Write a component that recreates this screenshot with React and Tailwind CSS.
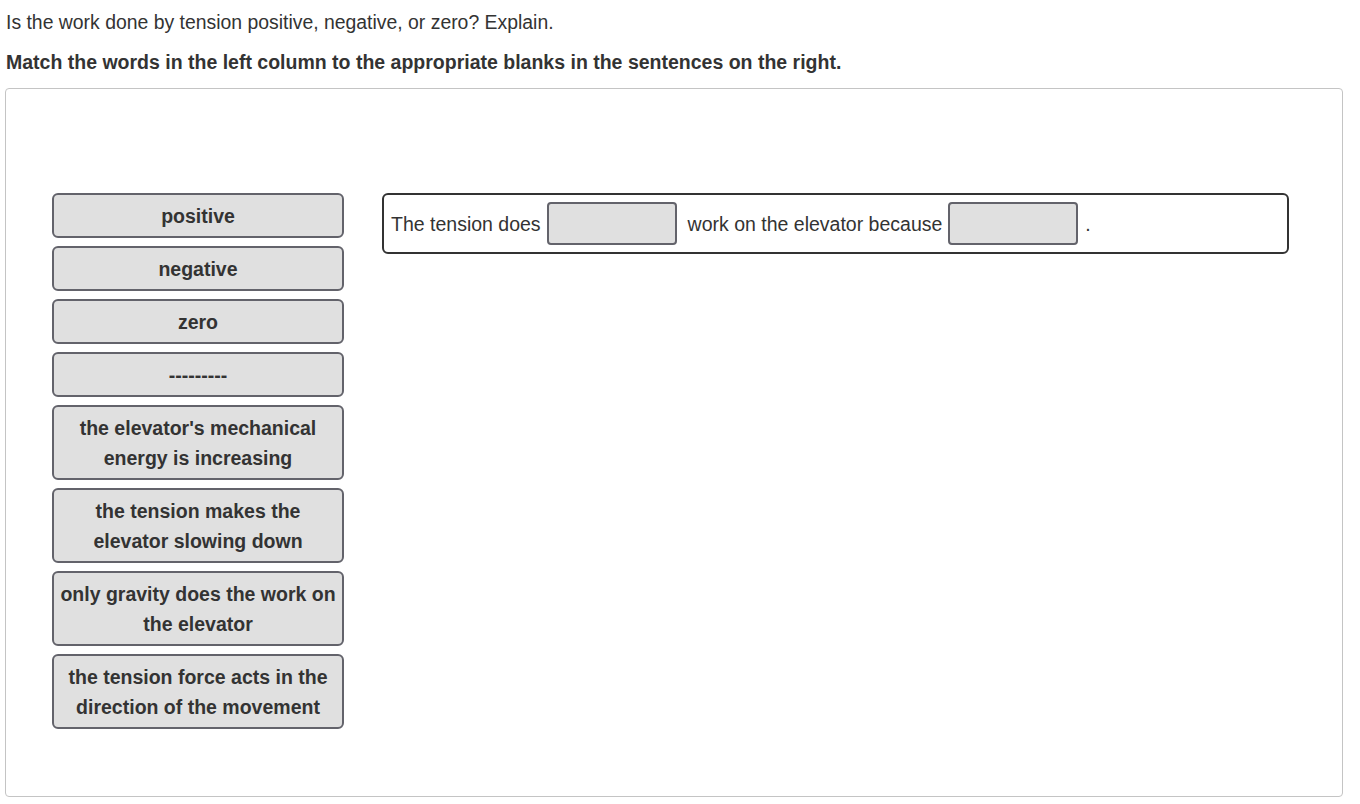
import React from 'react';

const choices = [
  'positive',
  'negative',
  'zero',
  '---------',
  "the elevator's mechanical energy is increasing",
  'the tension makes the elevator slowing down',
  'only gravity does the work on the elevator',
  'the tension force acts in the direction of the movement',
];

const Chip = ({ label }) => (
  <div className="w-[292px] rounded-[6px] border-2 border-[#63636b] bg-[#e0e0e0] px-[6px] py-[5.5px] text-center text-[19.5px] font-bold leading-[30px] text-[#333]">
    {label}
  </div>
);

const Blank = () => (
  <div className="h-[43px] w-[130px] shrink-0 rounded-[4px] border-2 border-[#63636b] bg-[#e0e0e0]" />
);

export default function App() {
  return (
    <div className="min-h-screen bg-white px-[5px] pt-[10px] text-[#333]" style={{ fontFamily: '"Liberation Sans", Arial, sans-serif' }}>
      <p className="pl-px text-[19.4px] leading-[24px]">
        Is the work done by tension positive, negative, or zero? Explain.
      </p>
      <p className="mt-[16px] pl-px text-[19.5px] font-bold leading-[24px]">
        Match the words in the left column to the appropriate blanks in the sentences on the right.
      </p>
      <div className="mt-[14px] flex h-[709px] w-[1338px] gap-[38px] rounded-[4px] border border-[#c4c4c4] pl-[46px] pt-[104px]">
        <div className="flex flex-col gap-[8px]">
          {choices.map((c) => (
            <Chip key={c} label={c} />
          ))}
        </div>
        <div>
          <div className="flex h-[61px] w-[907px] items-center rounded-[6px] border-2 border-[#333] px-[7px] text-[19.5px] leading-[24px]">
            <span>The tension does</span>
            <div className="ml-[6px]">
              <Blank />
            </div>
            <span className="ml-[11px]">work on the elevator because</span>
            <div className="ml-[6px]">
              <Blank />
            </div>
            <span className="ml-[7px]">.</span>
          </div>
        </div>
      </div>
    </div>
  );
}
